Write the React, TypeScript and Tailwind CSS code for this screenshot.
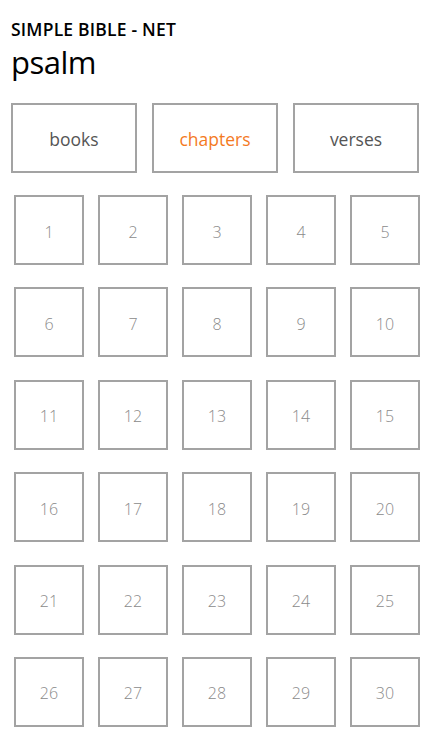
import React from "react";

export default function App() {
  const nums = Array.from({ length: 30 }, (_, i) => i + 1);
  return (
    <div className="w-[443px] h-[738px] bg-white overflow-hidden" style={{ fontFamily: '"Open Sans", "Noto Sans", sans-serif' }}>
      <div className="pl-[11px] pt-[18px]">
        <div className="text-[17.5px] leading-[22px] font-semibold text-black tracking-[0.2px]">SIMPLE BIBLE - NET</div>
        <div className="text-[31px] leading-[40px] text-black mt-[2px] tracking-[-0.5px]">psalm</div>
      </div>
      <div className="flex gap-[15px] pl-[11px] mt-[21px]">
        {[
          { t: "books", c: "text-[#555555]" },
          { t: "chapters", c: "text-[#f47a1f]" },
          { t: "verses", c: "text-[#555555]" },
        ].map((b) => (
          <div key={b.t} className={`w-[126px] h-[70px] border-2 border-[#a3a3a3] flex items-center justify-center pt-[3px] text-[17.5px] ${b.c}`}>
            {b.t}
          </div>
        ))}
      </div>
      <div className="grid grid-cols-[repeat(5,70px)] gap-x-[14px] gap-y-[22.4px] pl-[14px] mt-[22px]">
        {nums.map((n) => (
          <div key={n} className="w-[70px] h-[70px] border-2 border-[#a3a3a3] flex items-center justify-center pt-[3px] text-[16px] font-light text-[#8a8a8a]">
            {n}
          </div>
        ))}
      </div>
    </div>
  );
}
